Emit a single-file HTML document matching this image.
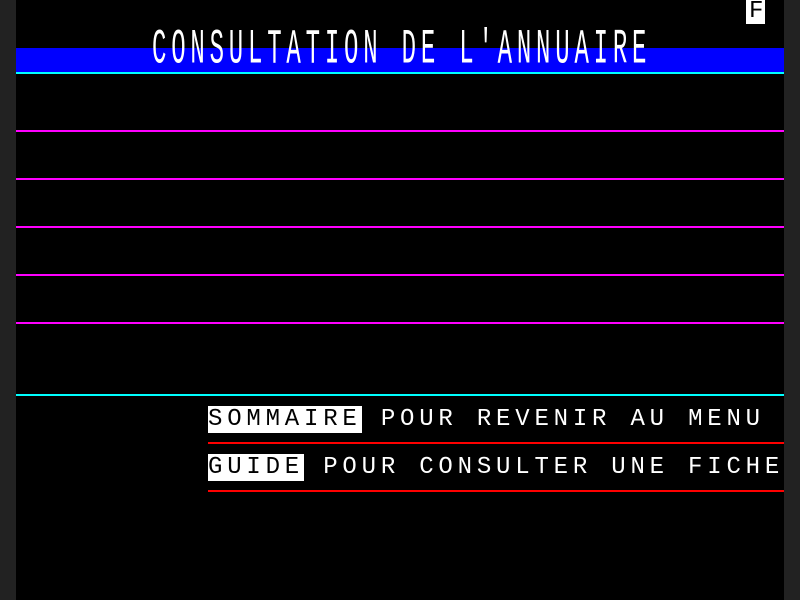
<!DOCTYPE html>
<html><head><meta charset="utf-8"><style>
html,body{margin:0;padding:0;background:#222;}
#s{position:absolute;left:16px;top:0;width:768px;height:600px;background:#000;overflow:hidden;}
.t{position:absolute;font-family:"Liberation Mono",monospace;font-size:24px;letter-spacing:4.8px;color:#fff;line-height:24px;height:24px;white-space:pre;}
.l{position:absolute;height:2px;}
.inv{background:#fff;color:#000;}
</style></head><body>
<div id="s">
<div class="t inv" style="left:730px;top:0;width:19px;letter-spacing:0;padding-left:3px;box-sizing:border-box;">F</div>
<div style="position:absolute;left:0;top:48px;width:768px;height:24px;background:#0000ff"></div>
<div class="t" style="left:136px;top:40px;transform:scaleY(2.05);transform-origin:0 50%;">CONSULTATION DE L'ANNUAIRE</div>
<div class="l" style="left:0;top:72px;width:768px;background:#00ffff"></div>
<div class="l" style="left:0;top:130px;width:768px;background:#ff00ff"></div>
<div class="l" style="left:0;top:178px;width:768px;background:#ff00ff"></div>
<div class="l" style="left:0;top:226px;width:768px;background:#ff00ff"></div>
<div class="l" style="left:0;top:274px;width:768px;background:#ff00ff"></div>
<div class="l" style="left:0;top:322px;width:768px;background:#ff00ff"></div>
<div class="l" style="left:0;top:394px;width:768px;background:#00ffff"></div>
<div class="t" style="left:192px;top:408px;"><span class="inv">SOMMAIRE</span> POUR REVENIR AU MENU</div>
<div class="l" style="left:192px;top:442px;width:576px;background:#ff0000"></div>
<div class="t" style="left:192px;top:456px;"><span class="inv">GUIDE</span> POUR CONSULTER UNE FICHE</div>
<div class="l" style="left:192px;top:490px;width:576px;background:#ff0000"></div>
</div>
</body></html>
